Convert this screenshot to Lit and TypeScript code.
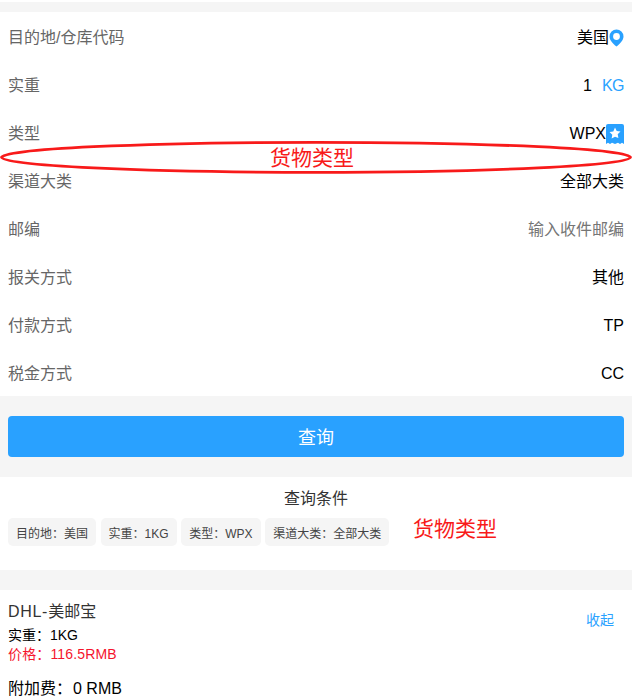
import { LitElement, html, css } from "lit";
import { customElement } from "lit/decorators.js";

const rows: [string, unknown, string?][] = [
  ["目的地/仓库代码", "pin"],
  ["实重", "kg"],
  ["类型", "wpx"],
  ["渠道大类", "全部大类"],
  ["邮编", "输入收件邮编", "ph"],
  ["报关方式", "其他"],
  ["付款方式", "TP"],
  ["税金方式", "CC"],
];
const tags = ["目的地：美国", "实重：1KG", "类型：WPX", "渠道大类：全部大类"];

@customElement("app-root")
export class AppRoot extends LitElement {
  static styles = css`
    :host {
      display: block;
      position: relative;
      width: 632px;
      height: 700px;
      overflow: hidden;
      background: #fff;
      font-family: "Liberation Sans", "Noto Sans CJK SC", sans-serif;
      font-size: 16px;
      color: #000;
    }
    .gap { background: #f5f5f5; }
    .g0 { height: 10px; margin-top: 2px; }
    .g1 { height: 20px; }
    .row {
      height: 48px;
      display: flex;
      align-items: center;
      justify-content: space-between;
      padding: 4px 8px 0;
      box-sizing: border-box;
      line-height: 22px;
    }
    .label { color: #666; }
    .val { display: flex; align-items: center; }
    .ph { color: #757575; }
    .blue { color: #2aa2ff; margin-left: 10px; letter-spacing: -0.5px; }
    .val svg { display: block; }
    .actions { background: #f5f5f5; padding: 20px 8px; }
    .btn {
      height: 41px;
      box-sizing: border-box;
      padding-bottom: 2px;
      background: #29a1ff;
      border-radius: 4px;
      color: #fff;
      font-size: 18px;
      display: flex;
      align-items: center;
      justify-content: center;
    }
    .cond { height: 93px; box-sizing: border-box; padding-top: 10px; }
    .title { text-align: center; font-size: 16px; line-height: 24px; color: #333; }
    .tags { display: flex; gap: 4.6px; padding: 7px 8px 0; }
    .tag {
      background: #f5f5f5;
      border-radius: 5px;
      height: 28px;
      padding: 0 8px;
      display: flex;
      align-items: center;
      font-size: 12px;
      color: #444;
      white-space: nowrap;
    }
    .item { position: relative; padding: 9px 8px 0; }
    .name { font-size: 16px; line-height: 25px; margin-bottom: 2px; color: #333; }
    .latin { letter-spacing: 0.7px; }
    .line { font-size: 14px; line-height: 19px; }
    .price { font-size: 14px; line-height: 19px; color: #f5142d; letter-spacing: 0.15px; }
    .extra { font-size: 16px; line-height: 24px; margin-top: 13px; }
    .amount { margin-left: 1px; }
    .fold { position: absolute; right: 18px; top: 21px; font-size: 14px; line-height: 18px; color: #2aa2ff; }
    .mark {
      position: absolute;
      color: #f81a1a;
      font-size: 21px;
      line-height: 28px;
      white-space: nowrap;
    }
    .m1 { left: 270px; top: 144px; }
    .m2 { left: 413px; top: 515px; }
    .ellipse { position: absolute; left: 0; top: 140px; display: block; }
  `;

  private value(v: unknown, cls?: string) {
    if (v === "pin")
      return html`美国<svg width="15" height="18" viewBox="0 0 15 18"><path fill="#29a1ff" fill-rule="evenodd" d="M7.500 .5a7 7 0 0 1 7 7c0 3.600-3.400 7.200-7 10-3.600-2.800-7-6.400-7-10a7 7 0 0 1 7-7Zm0 3.600a3.400 3.400 0 1 0 0 6.800 3.400 3.400 0 0 0 0-6.800Z"/></svg>`;
    if (v === "kg") return html`1<span class="blue">KG</span>`;
    if (v === "wpx")
      return html`WPX<svg width="18" height="21" viewBox="0 0 18 21"><path fill="#29a1ff" d="M2 0h14a2 2 0 0 1 2 2v18l-2-1.200-2 1.200-2-1.200-3 1.200-3-1.200-2 1.200-2-1.200-2 1.200V2a2 2 0 0 1 2-2Z"/><path fill="#fff" d="m9 3.500 1.700 3.500 3.800.5-2.800 2.700.7 3.800L9 12.700l-3.400 1.800.7-3.800-2.800-2.700 3.800-.5Z"/></svg>`;
    return html`<span class=${cls ?? ""}>${v}</span>`;
  }

  render() {
    return html`
      <div class="gap g0"></div>
      ${rows.map(
        ([l, v, c]) => html`<div class="row"><span class="label">${l}</span><span class="val">${this.value(v, c)}</span></div>`
      )}
      <div class="actions"><div class="btn">查询</div></div>
      <div class="cond">
        <div class="title">查询条件</div>
        <div class="tags">${tags.map((t) => html`<div class="tag">${t}</div>`)}</div>
      </div>
      <div class="gap g1"></div>
      <div class="item">
        <div class="name"><span class="latin">DHL-</span>美邮宝</div>
        <div class="line">实重：1KG</div>
        <div class="price">价格：116.5RMB</div>
        <div class="extra">附加费：<span class="amount">0 RMB</span></div>
        <div class="fold">收起</div>
      </div>
      <svg class="ellipse" width="632" height="36" viewBox="0 0 632 36">
        <ellipse cx="316" cy="17.300" rx="314.500" ry="15" fill="none" stroke="#f81a1a" stroke-width="2.800"/>
      </svg>
      <div class="mark m1">货物类型</div>
      <div class="mark m2">货物类型</div>
    `;
  }
}
